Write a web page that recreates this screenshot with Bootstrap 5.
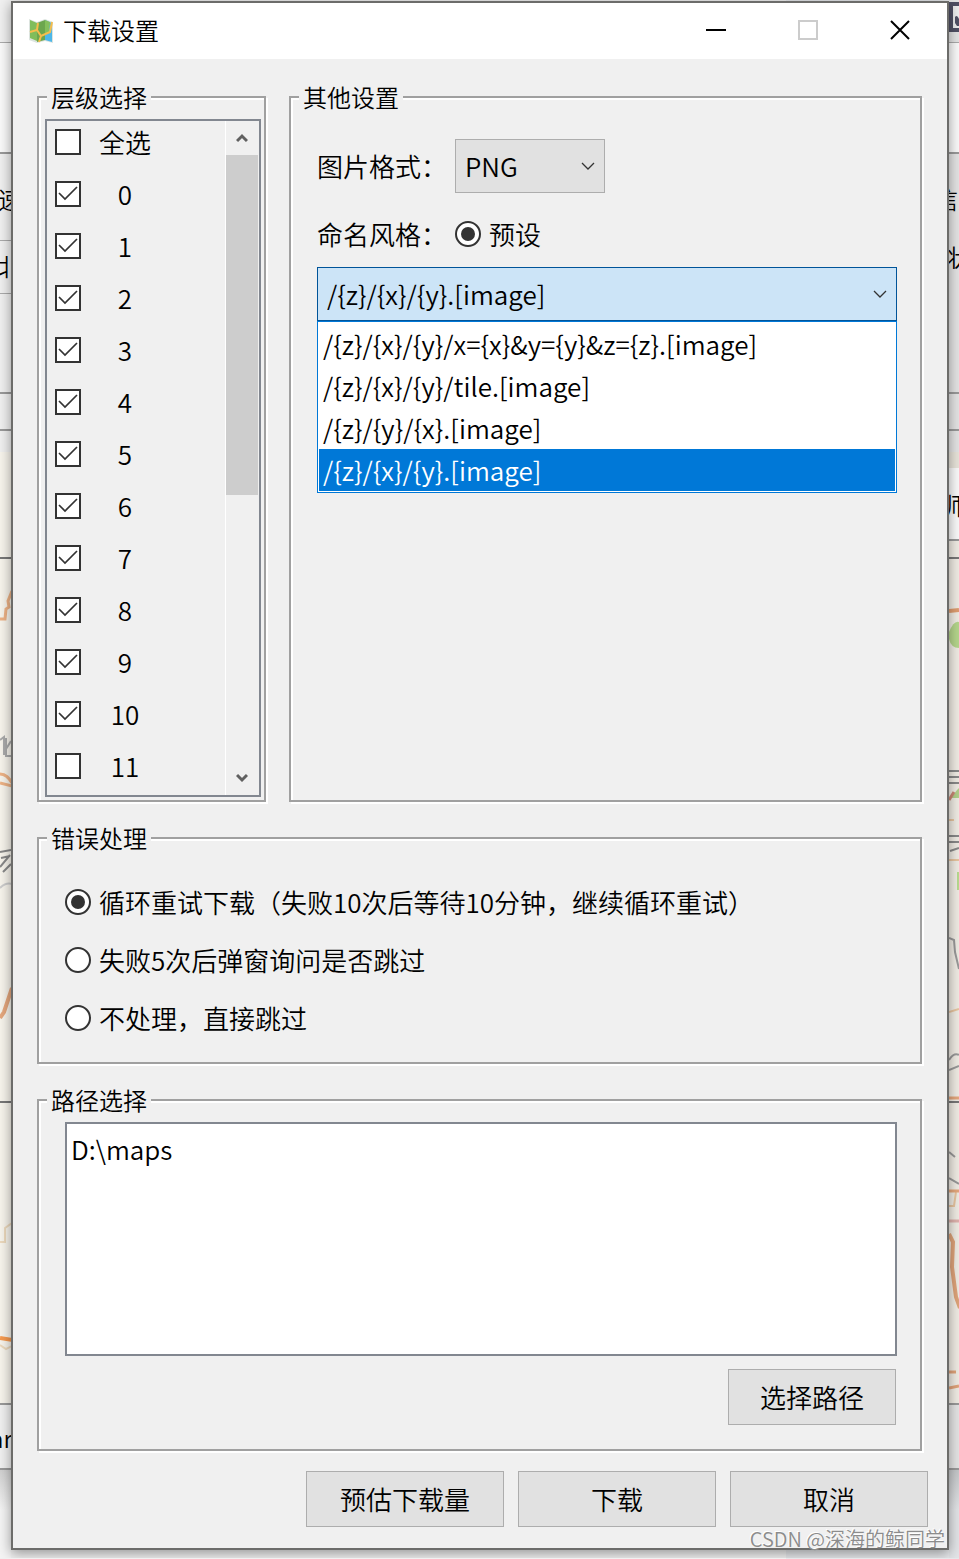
<!DOCTYPE html>
<html lang="zh-CN">
<head>
<meta charset="utf-8">
<meta name="viewport" content="width=device-width, initial-scale=1">
<title>下载设置</title>
<link href="https://cdn.jsdelivr.net/npm/bootstrap@5.3.0/dist/css/bootstrap.min.css" rel="stylesheet">
<style>
  body { font-family: "Noto Sans CJK SC", sans-serif; font-size: 26px; line-height: 26px; font-weight: 350; color: #000; background: linear-gradient(90deg, #f1f1f1 82%, #e6e8eb 82%); }
  /* main window visible behind the dialog */
  .behind { flex: 0 0 11px; overflow: hidden; background: #f7f4ec; }
  .behind.right-side { flex-basis: 10px; background: #f0ece4; }
  .band { flex: none; overflow: hidden; white-space: nowrap; font-size: 24px; background: #f0f0f0; }
  .band.lined { border-bottom: 2px solid #999; }
  .band.thin { border-bottom: 1px solid #aaa; }
  .right-side .band { background: #e4e4e4; }
  .behind .band.pale { background: #fafafa; }
  .h-tool { height: 43px; } .h-tabs { height: 111px; } .h-row1 { height: 87px; } .h-row2 { height: 53px; }
  .h-rest { height: 100px; } .h-status { height: 37px; } .h-gap { height: 21px; } .h-foot { height: 65px; }
  .h-sheet { height: 73px; } .h-info { height: 240px; }
  .desk { background: linear-gradient(#d0d0d0, #f4f4f4 40px); }
  .right-side .desk { background: linear-gradient(#c4c6c8, #e2e4e7 40px); }
  .map-part { flex: none; display: block; }
  .cut-left { text-indent: -2px; } .cut-mid { text-indent: -6px; } .cut-more { text-indent: -10px; } .cut-most { text-indent: -15px; }

  .dialog-win { flex: 1 1 0; min-width: 0; margin: 1px 0 8px; border: 2px solid #6c6c6a; background: #f0f0f0; box-shadow: 0 3px 12px rgba(0,0,0,.4); }
  .title-bar { height: 56px; padding-left: 15px; background: #fff; }
  .title-bar h1 { font-size: 24px; line-height: 32px; font-weight: 350; margin: 0 0 0 9px; padding-bottom: 2px; }
  .win-btn { width: 92px; height: 56px; border: 0; padding: 0 2px 2px 0; background: none; }
  .dialog-body { padding: 20px 25px 0 24px; }

  .group-box { border: 2px solid #a0a0a0; box-shadow: 2px 2px 0 #fff, inset 2px 2px 0 #fff; padding-left: 6px; }
  .group-box legend { float: none; width: auto; margin: 0 0 0 2px; padding: 0 4px; font-size: 24px; line-height: 36px; background: #f0f0f0; }
  .group-inner { padding: 0 23px 0 20px; }
  .levels { flex: 0 0 229px; padding: 4px 3px 3px 6px; }
  .others { padding-top: 24px; }
  .stack-gap { gap: 18px; }
  .box-gap { gap: 23px; }

  .level-list { border: 2px solid #828790; }
  .level-items { padding: 8px 0 16px 8px; gap: 26px; }
  .level-items span { width: 52px; margin-left: 18px; text-align: center; white-space: nowrap; }
  .scroll-track { width: 34px; border-left: 1px solid #fff; padding-right: 1px; }
  .scroll-track button { height: 34px; border: 0; padding: 0; background: none; }
  .scroll-thumb { height: 340px; background: #cdcdcd; }

  .form-check-input.tick { width: 26px; height: 26px; margin: 0; float: none; flex: none; border: 2px solid #333; background-color: #fff; background-size: 22px 22px; }
  .form-check-input.tick[type=checkbox] { border-radius: 0; }
  .form-check-input.tick[type=checkbox]:checked { background-image: url("data:image/svg+xml,%3Csvg xmlns='http://www.w3.org/2000/svg' viewBox='0 0 22 22'%3E%3Cpath d='M2 10l6 6L20 4' fill='none' stroke='%23333' stroke-width='1.700'/%3E%3C/svg%3E"); }
  .form-check-input.tick[type=radio]:checked { background-image: url("data:image/svg+xml,%3Csvg xmlns='http://www.w3.org/2000/svg' viewBox='0 0 22 22'%3E%3Ccircle cx='11' cy='11' r='7' fill='%23333'/%3E%3C/svg%3E"); }
  .choice { gap: 8px; }

  .field-label { width: 138px; white-space: nowrap; }
  .form-select.combo { height: 54px; padding: 0 32px 0 9px; border: 1px solid #adadad; border-radius: 0; color: #000; font-size: 26px; font-weight: 350; line-height: 52px; background-color: #e1e1e1; background-size: 16px 16px; background-position: right 8px center;
    background-image: url("data:image/svg+xml,%3Csvg xmlns='http://www.w3.org/2000/svg' viewBox='0 0 16 16'%3E%3Cpath d='M2 5l6 6 6-6' fill='none' stroke='%23333' stroke-width='1.300'/%3E%3C/svg%3E"); }
  .form-select.format { width: 150px; }
  .form-select.open { margin-top: 20px; border-color: #005499; background-color: #cce4f7; }
  .row-gap-lg { margin-top: 28px; }
  .option-list { padding: 1px; border: 1px solid #0078d7; border-radius: 0; background: #fff; }
  .option-list .list-group-item { padding: 0 4px; border: 0; border-radius: 0; line-height: 42px; height: 42px; color: #000; white-space: nowrap; }
  .option-list .list-group-item.active { background: #0078d7; color: #fff; margin: 0; }

  .errors { padding-top: 33px; padding-bottom: 31px; }
  .error-choices { gap: 32px; }
  .paths { padding-top: 4px; padding-bottom: 24px; }
  .form-control.path-text { height: 234px; padding: 6px 4px; border: 2px solid #828790; border-radius: 0; color: #000; font-size: 26px; line-height: 38px; font-weight: 350; resize: none; }
  .btn.push { height: 56px; width: 198px; padding: 0; border: 1px solid #adadad; border-radius: 0; background: #e1e1e1; color: #000; font-size: 26px; line-height: 54px; font-weight: 350; }
  .btn.pick { width: 168px; margin-top: 13px; margin-right: 1px; }
  .actions { gap: 14px; padding: 20px 19px 21px; }
  .watermark { right: 14px; bottom: 4px; font-size: 20px; line-height: 30px; color: #8c8c8c; text-shadow: -1px -1px 0 #fff; white-space: nowrap; }
</style>
</head>
<body>
<div class="d-flex position-relative">
  <div class="behind d-flex flex-column" aria-hidden="true">
    <div class="band thin h-tool"></div>
    <div class="band lined pale h-tabs"></div>
    <div class="band thin h-row1 cut-left pt-4"><div class="pt-2">速</div></div>
    <div class="band thin h-row2 cut-left pt-2"><div class="pt-1">北</div></div>
    <div class="band lined h-rest"></div>
    <div class="band lined h-status"></div>
    <div class="band h-gap"></div>
    <svg class="map-part" width="11" height="953" viewBox="0 452 11 953" fill="none">
      <path d="M0 558h11M0 1102h11" stroke="#777" stroke-width="2"/>
      <path d="M0 619h5l1-10 3-2-1-6 4-10M0 774c6 0 9 4 12 9M0 783l12 3" stroke="#edb285" stroke-width="3"/>
      <path d="M0 740l4-3v18M6 738v18h5M11 741l-5 8" stroke="#aaa" stroke-width="2"/>
      <path d="M0 852l11-2M1 858l9-2M0 867l10-12M3 872l8-8" stroke="#888" stroke-width="2"/>
      <path d="M0 888q6-6 12-4" stroke="#ccc" stroke-width="2"/>
      <path d="M0 1018l4-6 8-24" stroke="#e5a77d" stroke-width="4"/>
      <path d="M0 1242h5v-14l7-5M0 1345l6 4 6-3" stroke="#ecd9bd" stroke-width="2"/>
      <path d="M0 1338l12 2" stroke="#f69a4f" stroke-width="4"/>
      <path d="M0 1404h11" stroke="#999" stroke-width="2"/>
    </svg>
    <div class="band lined h-foot cut-more pt-3"><div class="pt-1">ar</div></div>
    <div class="desk flex-grow-1"></div>
  </div>

  <main class="dialog-win position-relative">
    <header class="title-bar d-flex align-items-center">
      <svg width="26" height="26" viewBox="0 0 26 26" aria-hidden="true">
        <path d="M1 1l8 3 8-3 8 3v21l-8-2-8 2-8-3z" fill="#dce4df"/>
        <path d="M2 2l7 3v18l-7-3z" fill="#80bd5b"/><path d="M9 5l8-3v20l-8 2z" fill="#6ca64e"/><path d="M17 2l7 3v19l-7-2z" fill="#4db7e8"/>
        <path d="M17 2l5 2-1 11-4 2z" fill="#85bf5c"/>
        <path d="M2 14l7-2 1-7M9 12l4 6 9-4 2-10M13 18l-2 6" fill="none" stroke="#f5bd4c" stroke-width="2"/>
      </svg>
      <h1>下载设置</h1>
      <div class="d-flex ms-auto">
        <button class="win-btn" aria-label="最小化"><svg class="d-block mx-auto" width="20" height="20"><path d="M0 10h20" stroke="#000" stroke-width="2"/></svg></button>
        <button class="win-btn" aria-label="最大化" disabled><svg class="d-block mx-auto" width="20" height="20"><path d="M1 1h18v18H1z" fill="none" stroke="#ccc" stroke-width="2"/></svg></button>
        <button class="win-btn" aria-label="关闭"><svg class="d-block mx-auto" width="20" height="20"><path d="M1 1l18 18M19 1L1 19" stroke="#000" stroke-width="2"/></svg></button>
      </div>
    </header>

    <form class="dialog-body vstack stack-gap">
      <div class="d-flex box-gap">
        <fieldset class="group-box levels">
          <legend>层级选择</legend>
          <div class="level-list d-flex">
            <div class="level-items vstack">
              <label class="d-flex"><input class="form-check-input tick" type="checkbox"><span>全选</span></label>
              <label class="d-flex"><input class="form-check-input tick" type="checkbox" checked><span>0</span></label>
              <label class="d-flex"><input class="form-check-input tick" type="checkbox" checked><span>1</span></label>
              <label class="d-flex"><input class="form-check-input tick" type="checkbox" checked><span>2</span></label>
              <label class="d-flex"><input class="form-check-input tick" type="checkbox" checked><span>3</span></label>
              <label class="d-flex"><input class="form-check-input tick" type="checkbox" checked><span>4</span></label>
              <label class="d-flex"><input class="form-check-input tick" type="checkbox" checked><span>5</span></label>
              <label class="d-flex"><input class="form-check-input tick" type="checkbox" checked><span>6</span></label>
              <label class="d-flex"><input class="form-check-input tick" type="checkbox" checked><span>7</span></label>
              <label class="d-flex"><input class="form-check-input tick" type="checkbox" checked><span>8</span></label>
              <label class="d-flex"><input class="form-check-input tick" type="checkbox" checked><span>9</span></label>
              <label class="d-flex"><input class="form-check-input tick" type="checkbox" checked><span>10</span></label>
              <label class="d-flex"><input class="form-check-input tick" type="checkbox"><span>11</span></label>
            </div>
            <div class="scroll-track d-flex flex-column">
              <button type="button" aria-label="向上滚动"><svg class="d-block mx-auto" width="12" height="10"><path d="M1 8l5-5 5 5" fill="none" stroke="#606060" stroke-width="3"/></svg></button>
              <div class="scroll-thumb"></div>
              <button type="button" class="mt-auto" aria-label="向下滚动"><svg class="d-block mx-auto" width="12" height="10"><path d="M1 2l5 5 5-5" fill="none" stroke="#606060" stroke-width="3"/></svg></button>
            </div>
          </div>
        </fieldset>

        <fieldset class="group-box others flex-grow-1">
          <legend>其他设置</legend>
          <div class="group-inner">
            <div class="d-flex align-items-center">
              <label class="field-label" for="format">图片格式：</label>
              <select class="form-select combo format" id="format"><option>PNG</option></select>
            </div>
            <div class="d-flex align-items-center row-gap-lg">
              <span class="field-label">命名风格：</span>
              <label class="d-flex choice"><input class="form-check-input tick" type="radio" name="style" checked><span>预设</span></label>
            </div>
            <select class="form-select combo open" aria-label="命名风格"><option>/{z}/{x}/{y}.[image]</option></select>
            <ul class="list-group option-list" role="listbox" aria-label="命名风格选项">
              <li class="list-group-item" role="option">/{z}/{x}/{y}/x={x}&amp;y={y}&amp;z={z}.[image]</li>
              <li class="list-group-item" role="option">/{z}/{x}/{y}/tile.[image]</li>
              <li class="list-group-item" role="option">/{z}/{y}/{x}.[image]</li>
              <li class="list-group-item active" role="option" aria-selected="true">/{z}/{x}/{y}.[image]</li>
            </ul>
          </div>
        </fieldset>
      </div>

      <fieldset class="group-box errors">
        <legend>错误处理</legend>
        <div class="group-inner vstack error-choices">
          <label class="d-flex choice"><input class="form-check-input tick" type="radio" name="error" checked><span>循环重试下载（失败10次后等待10分钟，继续循环重试）</span></label>
          <label class="d-flex choice"><input class="form-check-input tick" type="radio" name="error"><span>失败5次后弹窗询问是否跳过</span></label>
          <label class="d-flex choice"><input class="form-check-input tick" type="radio" name="error"><span>不处理，直接跳过</span></label>
        </div>
      </fieldset>

      <fieldset class="group-box paths">
        <legend>路径选择</legend>
        <div class="group-inner">
          <textarea class="form-control path-text" aria-label="路径" spellcheck="false">D:\maps</textarea>
          <div class="d-flex justify-content-end"><button type="button" class="btn push pick">选择路径</button></div>
        </div>
      </fieldset>
    </form>

    <footer class="actions d-flex justify-content-end">
      <button type="button" class="btn push">预估下载量</button>
      <button type="button" class="btn push">下载</button>
      <button type="button" class="btn push">取消</button>
    </footer>
  </main>

  <div class="behind right-side d-flex flex-column" aria-hidden="true">
    <div class="band thin h-tool"><svg class="d-block" width="10" height="32"><path d="M0 2h10v30H0z" fill="#505064"/><path d="M4 6h6v22H4z" fill="#eee"/><path d="M6 17q2-3 4 2v7H8l-2-3z" fill="#505064"/></svg></div>
    <div class="band lined pale h-tabs"></div>
    <div class="band lined h-info pt-4"><div class="pt-2 cut-most">信息</div><div class="cut-left pt-4"><div class="pt-2">状态</div></div></div>
    <div class="band lined h-status"></div>
    <div class="band h-gap"></div>
    <svg class="map-part" width="10" height="16"><path d="M0 0h10v16H0z" fill="#e8e4da"/></svg>
    <div class="band lined pale h-sheet cut-mid pt-4">师</div>
    <svg class="map-part" width="10" height="864" viewBox="0 541 10 864" fill="none">
      <path d="M0 558h10M0 1102h10" stroke="#777" stroke-width="2"/>
      <path d="M0 611l10-1" stroke="#df9d70" stroke-width="4"/>
      <path d="M0 632q5-12 10-10v26q-8 0-10-9z" fill="#b5d68c"/>
      <path d="M0 771h10M0 777h10M0 783h10M0 836h10M0 842h10M1 851l9-3" stroke="#888" stroke-width="2"/>
      <path d="M2 798l6-8 2-2v10z" fill="#b2cf8a"/><path d="M0 800l5-8" stroke="#cb8875" stroke-width="3"/>
      <path d="M0 820h5M0 860h10M0 1012l10-3M0 1206h5l2-14" stroke="#e8c5a0" stroke-width="2"/>
      <path d="M8 872h2v18H8z" fill="#b8db90"/>
      <path d="M0 938l5 2 1 12 4 17M0 1060q5-8 10-5M0 1070l10-4M0 1152l6 5M0 1178l10 6" stroke="#999" stroke-width="2"/>
      <path d="M0 1098h10M0 1191h10" stroke="#e5a77d" stroke-width="3"/>
      <path d="M0 1221h10" stroke="#dfb2ad" stroke-width="3"/>
      <path d="M0 1234l4 8-1 25 4 30 4 11" stroke="#dfa47a" stroke-width="4"/>
      <path d="M0 1372h7M0 1388l10-2" stroke="#e0a37a" stroke-width="3"/>
      <path d="M0 1404h10" stroke="#999" stroke-width="2"/>
    </svg>
    <div class="band lined h-foot"></div>
    <div class="desk flex-grow-1"></div>
  </div>
  <div class="watermark position-absolute">CSDN @深海的鲸同学</div>
</div>
<script src="https://cdn.jsdelivr.net/npm/bootstrap@5.3.0/dist/js/bootstrap.bundle.min.js"></script>
</body>
</html>
